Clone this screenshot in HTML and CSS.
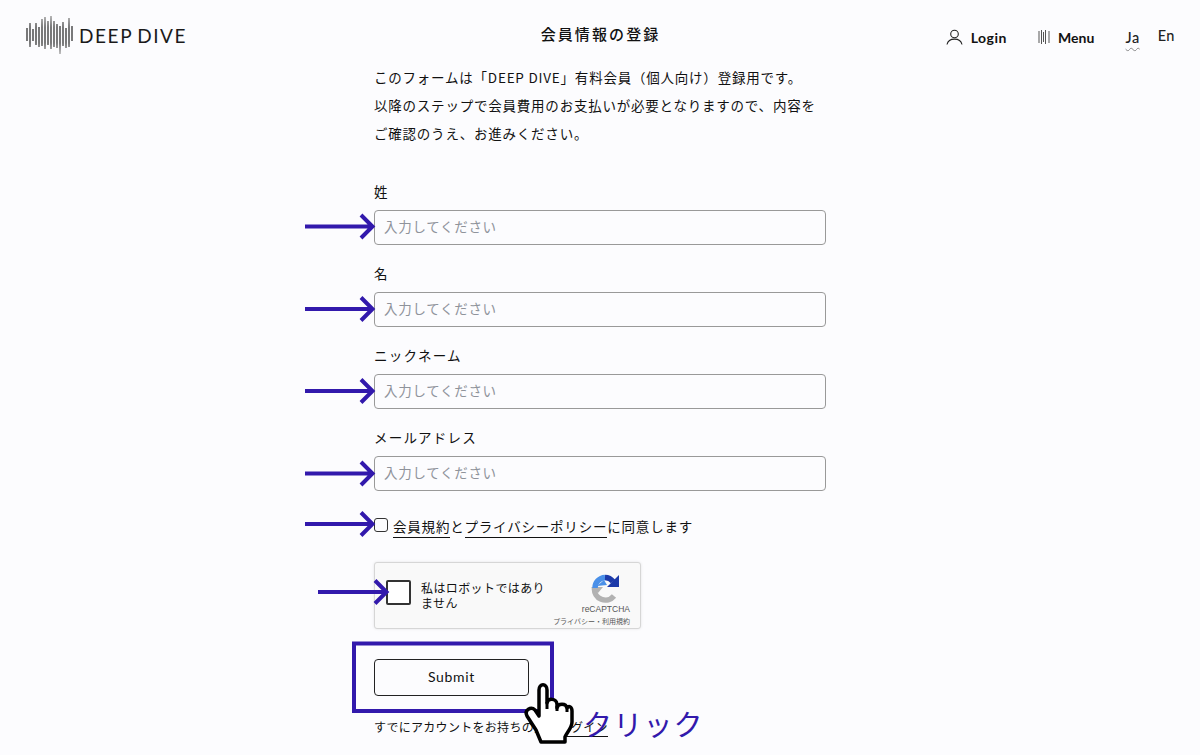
FILE: index.html
```html
<!DOCTYPE html>
<html lang="ja">
	<head>
		<meta charset="utf-8">
		<title>会員情報の登録</title>
		<link rel="stylesheet" href="styles.css">
	</head>
	<body>
		<header class="header">
			<div class="logo">
				<svg class="logo-mark" width="47" height="40" viewBox="0 0 47 40" fill="none" stroke="url(#logoFade)" stroke-width="1.300">
					<defs>
						<linearGradient id="logoFade" gradientUnits="userSpaceOnUse" x1="0" y1="0" x2="0" y2="40">
							<stop offset="0" stop-color="#999"/>
							<stop offset=".3" stop-color="#333"/>
							<stop offset=".7" stop-color="#333"/>
							<stop offset="1" stop-color="#aaa"/>
						</linearGradient>
					</defs>
					<path d="M1 13v13M4 8v24M7 14v12M10 8v22M13 12v20M16 4v27M19 2v32M22 6v24M25 1v33M28 6v26M31 9v24M34 11v28M37 7v24M40 13v20M43 3v29M46 11v15"/>
				</svg>
				<span class="logo-text">DEEP DIVE</span>
			</div>
			<h1 class="page-title">会員情報の登録</h1>
			<nav class="nav">
				<a class="nav-item nav-login">
					<svg width="17" height="16" viewBox="0 0 17 16" fill="none" stroke="#222" stroke-width="1.100">
						<circle cx="8.500" cy="5" r="3.800"/>
						<path d="M1 15.500c.8-3.600 3.600-5.400 7.500-5.400s6.700 1.800 7.500 5.400"/>
					</svg>
					Login
				</a>
				<a class="nav-item nav-menu">
					<svg width="12" height="14" viewBox="0 0 12 14" fill="none" stroke="#555" stroke-width="1">
						<path d="M1 1v12M3.500 0v14M5.500 2v10M7.500 0v14M11 1v12"/>
					</svg>
					Menu
				</a>
				<a class="lang lang-active">Ja</a>
				<a class="lang">En</a>
			</nav>
		</header>

		<main class="content">
			<p class="intro">
				このフォームは「DEEP DIVE」有料会員（個人向け）登録用です。<br>
				以降のステップで会員費用のお支払いが必要となりますので、内容を<br>
				ご確認のうえ、お進みください。
			</p>
			<form class="form" action="#">
				<div class="field">
					<label class="field-label">姓</label>
					<input class="field-input" type="text" placeholder="入力してください">
				</div>
				<div class="field">
					<label class="field-label">名</label>
					<input class="field-input" type="text" placeholder="入力してください">
				</div>
				<div class="field">
					<label class="field-label">ニックネーム</label>
					<input class="field-input" type="text" placeholder="入力してください">
				</div>
				<div class="field">
					<label class="field-label">メールアドレス</label>
					<input class="field-input" type="text" placeholder="入力してください">
				</div>
				<div class="agree">
					<span class="agree-box"></span>
					<span><a class="text-link">会員規約</a>と<a class="text-link">プライバシーポリシー</a>に同意します</span>
				</div>
				<div class="captcha">
					<span class="captcha-box"></span>
					<span class="captcha-text">私はロボットではあり<br>ません</span>
					<div class="captcha-brand">
						<svg width="30" height="30" viewBox="0 0 30 30" fill="none" stroke-width="5.500">
							<path d="M24 23A11 11 0 0 1 4.500 15" stroke="#b2b2b2"/>
							<path d="M1 14h12l-5 6z" fill="#b2b2b2" stroke="none"/>
							<path d="M5 15A10.500 10.500 0 0 1 15 4.500" stroke="#4a90e8"/>
							<path d="M7 13l7-6 3 5z" fill="#4a90e8" stroke="none"/>
							<path d="M15 4.500a10.500 10.500 0 0 1 8 4" stroke="#1c3aa9"/>
							<path d="M17 14h12V2z" fill="#1c3aa9" stroke="none"/>
						</svg>
						<span class="captcha-name">reCAPTCHA</span>
						<span class="captcha-terms">プライバシー・利用規約</span>
					</div>
				</div>
				<button class="submit" type="button">Submit</button>
				<p class="login-note">すでにアカウントをお持ちの方は<a class="text-link">ログイン</a></p>
			</form>
		</main>

		<svg class="notes" width="1200" height="755" viewBox="0 0 1200 755" fill="none" stroke="#3219ac" stroke-width="4">
			<path d="M305 226.500h67M361 215l11.500 11.500L361 238"/>
			<path d="M305 309h67M361 297.500l11.500 11.500L361 320.500"/>
			<path d="M305 391h67M361 379.500l11.500 11.500L361 402.500"/>
			<path d="M305 473.500h67M361 462l11.500 11.500L361 485"/>
			<path d="M305 524h67M361 512.500l11.500 11.500L361 535.500"/>
			<path d="M318 592h68M375 580.500l11.500 11.500L375 603.500"/>
			<rect x="354" y="643.500" width="198" height="67.500"/>
			<path d="M541 742L536 730L527 716C524 710 531 706 535 710L539 716V690C539 683 547 683 547 690V703C548 698 556 698 557 704V708C558 703 566 703 567 708C569 705 572 707 572 711V722C572 728 567 732 565 737V742Z" fill="#fff" stroke="#000" stroke-width="3.500" stroke-linejoin="round"/>
			<path d="M547 702v7M557 706v5M567 708v4" stroke="#000" stroke-width="3"/>
		</svg>
		<span class="click-label">クリック</span>
	</body>
</html>
```

FILE: styles.css
```css
* {
	box-sizing: border-box;
}

html, body {
	height: 755px;
	overflow: hidden;
}

body {
	position: relative;
	margin: 0;
	background-color: #fcfcfe;
	color: #111;
	font-family: "Noto Sans CJK JP", "Noto Sans", sans-serif;
	font-size: 13.500px;
}

a {
	color: inherit;
}

.header {
	display: flex;
	align-items: center;
	justify-content: space-between;
	height: 70px;
	padding: 0 25px 0 26px;
}

.logo {
	display: flex;
	align-items: center;
	gap: 6px;
	width: 300px;
}

.logo-text {
	font-family: Lato, sans-serif;
	font-size: 19px;
	letter-spacing: 1.600px;
	word-spacing: -2px;
	color: #1a1a1a;
}

.page-title {
	margin: 0 0 4px;
	font-size: 15px;
	font-weight: 500;
	letter-spacing: 2.100px;
}

.nav {
	display: flex;
	justify-content: flex-end;
	align-items: center;
	width: 300px;
	font-family: Lato, sans-serif;
	font-size: 14px;
	font-weight: 700;
	letter-spacing: .5px;
}

.nav-item {
	display: flex;
	align-items: center;
	gap: 8px;
	padding-top: 4px;
}

.nav-login {
	margin-right: 31px;
}

.nav-menu {
	margin-right: 31px;
	letter-spacing: .1px;
}

.lang {
	font-size: 14.500px;
	font-weight: 500;
	color: #222;
}

.lang-active {
	margin-right: 18px;
	padding-top: 4px;
	text-decoration: underline wavy #888 1px;
	text-underline-offset: 4px;
}

.content {
	width: 452px;
	margin-left: 374px;
}

.intro {
	margin: -7px 0 0;
	line-height: 28px;
	letter-spacing: .78px;
	font-size: 13.500px;
}

.form {
	margin-top: 34px;
}

.field {
	margin-bottom: 18px;
}

.field-label {
	display: block;
	height: 29px;
	line-height: 20px;
	letter-spacing: 1.200px;
}

.field-input {
	display: block;
	width: 100%;
	height: 35px;
	padding: 0 9px 4px;
	border: 1px solid #999;
	border-radius: 4px;
	background: transparent;
	font-family: inherit;
	font-size: 13.500px;
	letter-spacing: .7px;
}

.field-input::placeholder {
	color: #8f939b;
	opacity: 1;
}

.agree {
	display: flex;
	align-items: center;
	gap: 5px;
	height: 20px;
	margin-top: 25px;
	letter-spacing: .8px;
}

.agree-box {
	width: 14px;
	height: 14px;
	margin-top: -3px;
	border: 1px solid #333;
	border-radius: 3px;
}

.text-link {
	border-bottom: 1px solid #111;
	padding-bottom: 1px;
}

.captcha {
	display: flex;
	align-items: center;
	width: 267px;
	height: 67px;
	margin-top: 26px;
	padding-left: 11px;
	border: 1px solid #d6d6d6;
	border-radius: 3px;
	background-color: #f9f9f9;
	box-shadow: 0 0 3px rgba(0, 0, 0, .1);
}

.captcha-box {
	flex: none;
	width: 25px;
	height: 25px;
	margin-top: -6px;
	border: 2px solid #333;
	border-radius: 2px;
	background-color: #fff;
}

.captcha-text {
	flex: none;
	width: 132px;
	margin: -2px 0 0 10px;
	font-size: 12px;
	line-height: 15px;
	letter-spacing: .4px;
}

.captcha-brand {
	display: flex;
	flex-direction: column;
	align-items: flex-end;
	flex: 1;
	padding: 9px 10px 0 0;
	color: #555;
}

.captcha-brand svg {
	margin-right: 10px;
}

.captcha-name {
	font-family: "Liberation Sans", sans-serif;
	font-size: 8.500px;
	line-height: 13px;
	margin-top: 0;
}

.captcha-terms {
	font-size: 7px;
	line-height: 11px;
	white-space: nowrap;
}

.submit {
	display: block;
	width: 155px;
	height: 37px;
	margin-top: 30px;
	padding-bottom: 3px;
	border: 1px solid #222;
	border-radius: 4px;
	background: transparent;
	color: #111;
	font-family: Lato, sans-serif;
	font-size: 14px;
	letter-spacing: .7px;
}

.login-note {
	margin: 22px 0 0;
	font-size: 12px;
	letter-spacing: .3px;
}

/* annotations drawn over the page */
.notes {
	position: absolute;
	top: 0;
	left: 0;
}

.click-label {
	position: absolute;
	top: 702px;
	left: 583px;
	color: #3219ac;
	font-size: 29px;
	line-height: 42px;
	letter-spacing: 1.200px;
}
```
